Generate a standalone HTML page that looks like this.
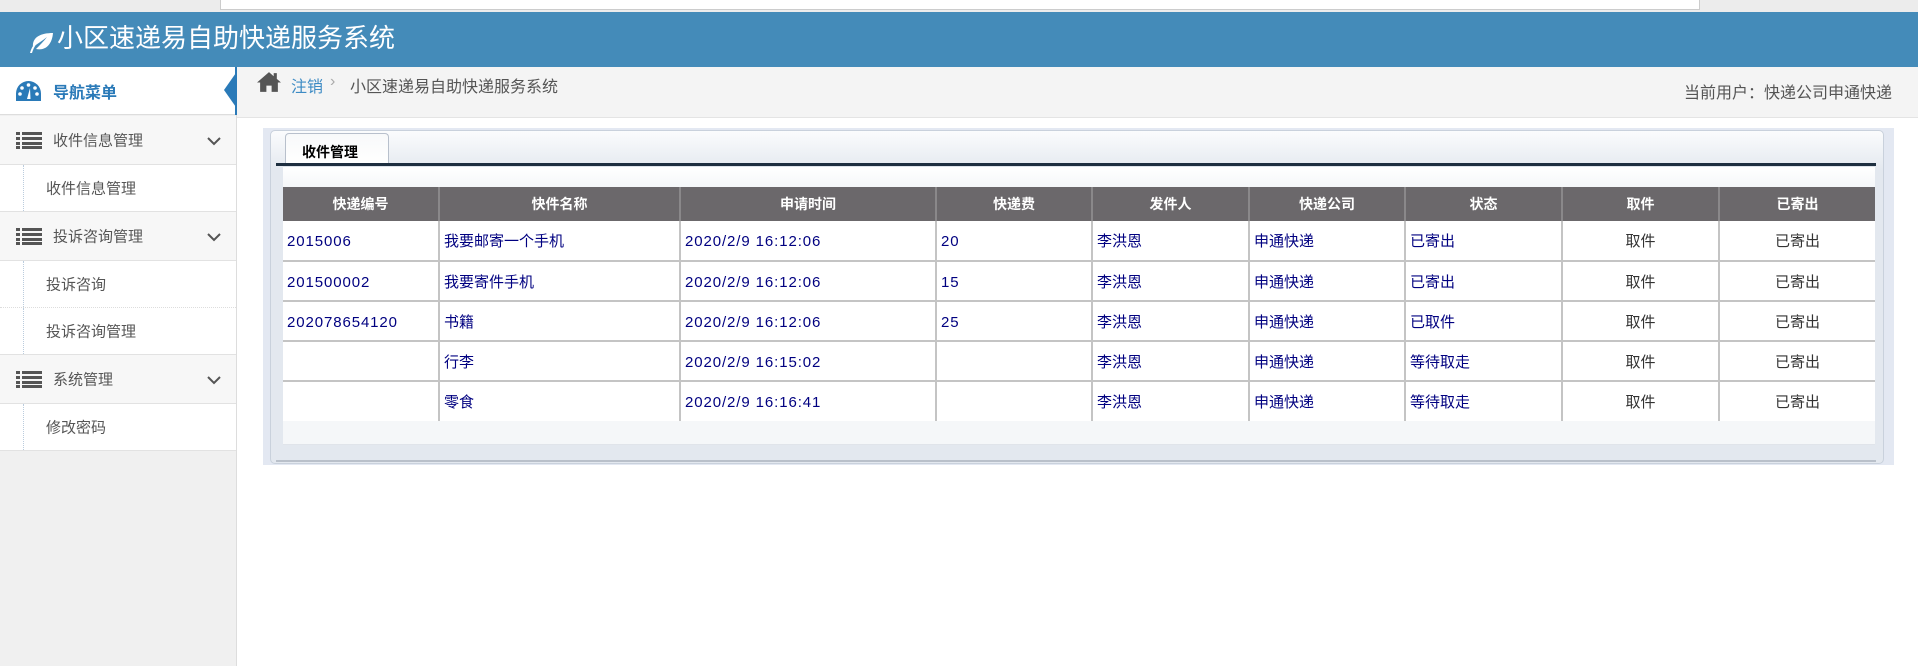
<!DOCTYPE html>
<html><head><meta charset="utf-8"><style>
*{margin:0;padding:0;box-sizing:border-box}
body{width:1918px;height:666px;overflow:hidden;background:#fff;font-family:"Liberation Sans","Noto Sans CJK SC",sans-serif;position:relative}
.abs{position:absolute}
#top{left:0;top:0;width:1918px;height:12px;background:#ececec}
#topin{left:220px;top:0;width:1480px;height:10px;background:#fff;border:1px solid #ccc;border-top:none}
#hdr{left:0;top:12px;width:1918px;height:55px;background:#448bb9;color:#fff}
#hdr .t{position:absolute;left:57px;top:9px;font-size:26px;line-height:34px}
#side{left:0;top:67px;width:237px;height:599px;background:#f0f0f0;border-right:1px solid #ddd}
.row{position:absolute;left:0;width:236px;border-bottom:1px solid #e2e2e2;font-size:15px;color:#555}
.grp{background:#f7f7f7}
.sub{background:#fff}
.row span{position:absolute;top:50%;transform:translateY(-50%)}
.dl{position:absolute;left:23px;top:0;bottom:0;border-left:1px dotted #bcd}
#bc{left:237px;top:67px;width:1681px;height:51px;background:#f4f4f4;border-bottom:1px solid #e4e4e4;font-size:15px;color:#555}
table{border-collapse:collapse;table-layout:fixed}
th{background:#6b686b;color:#fff;font-weight:bold;font-size:14px;height:34px;border-right:2px solid #8a888a}
td{height:40px;border:2px solid #c4c4c4;border-top:none;border-left:none;font-size:15px;color:#000080;padding-left:4px;background:#fff}
td.n{letter-spacing:0.9px;padding-top:2px}
td.c{text-align:center;color:#333;padding:0}
tr:last-child td{border-bottom:none}
</style></head><body>
<div id="top" class="abs"></div><div id="topin" class="abs"></div>
<div id="hdr" class="abs">
<svg class="abs" style="left:27px;top:19px" width="27" height="24" viewBox="0 0 27 24"><path d="M3 22 C5 14 10 9 18 6 C11 10 7 15 5 22Z M6 16 C5 6 14 2 26 2 C25 14 18 20 9 18 C13 14 17 10 20 6 C15 10 10 13 6 16Z" fill="#fff"/></svg>
<div class="t">小区速递易自助快递服务系统</div></div>
<div id="side" class="abs">
<div class="row sub" style="top:0;height:48px;border-bottom:1px solid #ddd">
<svg style="position:absolute;left:15px;top:13px" width="27" height="22" viewBox="0 0 27 22"><path d="M13.5 1A12.5 12.5 0 0 0 1 13.5V21H26V13.5A12.5 12.5 0 0 0 13.5 1Z" fill="#2a7ab8"/><circle cx="13.5" cy="5" r="1.8" fill="#fff"/><circle cx="7" cy="8" r="1.8" fill="#fff"/><circle cx="20" cy="8" r="1.8" fill="#fff"/><circle cx="5" cy="14" r="1.8" fill="#fff"/><circle cx="22" cy="14" r="1.8" fill="#fff"/><path d="M12 19L15 8L15.5 19Z" fill="#fff"/></svg>
<span style="left:53px;color:#2a7ab8;font-weight:bold;font-size:16px">导航菜单</span></div>
<div class="abs" style="left:224px;top:3px;width:0;height:0;border-top:20px solid transparent;border-bottom:20px solid transparent;border-right:14px solid #2a7ab8"></div>
<div class="abs" style="left:235px;top:0;width:4px;height:48px;background:#2a7ab8"></div>
<div class="row grp" style="top:49px;height:49px"><svg style="position:absolute;left:16px;top:16px" width="26" height="17"><g fill="#555"><rect x="0" y="0" width="4" height="3"/><rect x="6" y="0" width="20" height="3"/><rect x="0" y="5" width="4" height="3"/><rect x="6" y="5" width="20" height="3"/><rect x="0" y="10" width="4" height="3"/><rect x="6" y="10" width="20" height="3"/><rect x="0" y="14" width="4" height="3"/><rect x="6" y="14" width="20" height="3"/></g></svg><span style="left:53px">收件信息管理</span><svg style="position:absolute;left:207px;top:21px" width="14" height="9"><path d="M1 1L7 7L13 1" stroke="#555" stroke-width="2" fill="none"/></svg></div>
<div class="row sub" style="top:98px;height:47px"><div class="dl"></div><span style="left:46px">收件信息管理</span></div>
<div class="row grp" style="top:145px;height:49px"><svg style="position:absolute;left:16px;top:16px" width="26" height="17"><g fill="#555"><rect x="0" y="0" width="4" height="3"/><rect x="6" y="0" width="20" height="3"/><rect x="0" y="5" width="4" height="3"/><rect x="6" y="5" width="20" height="3"/><rect x="0" y="10" width="4" height="3"/><rect x="6" y="10" width="20" height="3"/><rect x="0" y="14" width="4" height="3"/><rect x="6" y="14" width="20" height="3"/></g></svg><span style="left:53px">投诉咨询管理</span><svg style="position:absolute;left:207px;top:21px" width="14" height="9"><path d="M1 1L7 7L13 1" stroke="#555" stroke-width="2" fill="none"/></svg></div>
<div class="row sub" style="top:194px;height:47px;border-bottom:1px dotted #ddd"><div class="dl"></div><span style="left:46px">投诉咨询</span></div>
<div class="row sub" style="top:241px;height:47px"><div class="dl"></div><span style="left:46px">投诉咨询管理</span></div>
<div class="row grp" style="top:288px;height:49px"><svg style="position:absolute;left:16px;top:16px" width="26" height="17"><g fill="#555"><rect x="0" y="0" width="4" height="3"/><rect x="6" y="0" width="20" height="3"/><rect x="0" y="5" width="4" height="3"/><rect x="6" y="5" width="20" height="3"/><rect x="0" y="10" width="4" height="3"/><rect x="6" y="10" width="20" height="3"/><rect x="0" y="14" width="4" height="3"/><rect x="6" y="14" width="20" height="3"/></g></svg><span style="left:53px">系统管理</span><svg style="position:absolute;left:207px;top:21px" width="14" height="9"><path d="M1 1L7 7L13 1" stroke="#555" stroke-width="2" fill="none"/></svg></div>
<div class="row sub" style="top:337px;height:47px"><div class="dl"></div><span style="left:46px">修改密码</span></div>
</div>
<div id="bc" class="abs">
<svg class="abs" style="left:20px;top:5px" width="24" height="20" viewBox="0 0 23 19"><path d="M11.5 0L0 10H3V19H9V13H14V19H20V10H23L19 6.5V1H16V4Z" fill="#555"/></svg>
<span class="abs" style="left:54px;top:6px;color:#3d8bc4;font-size:16px">注销</span>
<span class="abs" style="left:93px;top:6px;color:#aaa;font-size:16px">›</span>
<span class="abs" style="left:113px;top:6px;font-size:16px">小区速递易自助快递服务系统</span>
<span class="abs" style="right:26px;top:12px;font-size:16px">当前用户：快递公司申通快递</span>
</div>
<div class="abs" style="left:263px;top:128px;width:1631px;height:337px;background:#e3e8f2"></div>
<div class="abs" style="left:270px;top:130px;width:1614px;height:334px;background:linear-gradient(#fbfcfd,#e3e8ef 40px);border:1px solid #c9d1dc;border-radius:5px"></div>
<div class="abs" style="left:285px;top:133px;width:104px;height:31px;background:linear-gradient(#f8f9fa,#fff);border:1px solid #b8c0cc;border-bottom:none;border-radius:4px 4px 0 0;font-size:14px;font-weight:bold;padding:8px 0 0 16px;color:#000">收件管理</div>
<div class="abs" style="left:276px;top:163px;width:1600px;height:3px;background:#1e2f40"></div>
<div class="abs" style="left:283px;top:166px;width:1592px;height:279px;background:linear-gradient(#fff,#f5f7f9 20px);border-top:1px solid #dde3ea"></div>
<div class="abs" style="left:283px;top:444px;width:1592px;height:1px;background:#e0e4ea"></div>
<div class="abs" style="left:276px;top:460px;width:1600px;height:2px;background:#b9c0ca"></div>
<table class="abs" style="left:283px;top:187px;width:1592px">
<colgroup><col style="width:156px"><col style="width:241px"><col style="width:256px"><col style="width:156px"><col style="width:157px"><col style="width:156px"><col style="width:157px"><col style="width:157px"><col style="width:156px"></colgroup>
<tr><th>快递编号</th><th>快件名称</th><th>申请时间</th><th>快递费</th><th>发件人</th><th>快递公司</th><th>状态</th><th>取件</th><th style="border-right:none">已寄出</th></tr>
<tr><td class="n">2015006</td><td>我要邮寄一个手机</td><td class="n">2020/2/9 16:12:06</td><td class="n">20</td><td>李洪恩</td><td>申通快递</td><td>已寄出</td><td class="c">取件</td><td class="c" style="border-right:none">已寄出</td></tr>
<tr><td class="n">201500002</td><td>我要寄件手机</td><td class="n">2020/2/9 16:12:06</td><td class="n">15</td><td>李洪恩</td><td>申通快递</td><td>已寄出</td><td class="c">取件</td><td class="c" style="border-right:none">已寄出</td></tr>
<tr><td class="n">202078654120</td><td>书籍</td><td class="n">2020/2/9 16:12:06</td><td class="n">25</td><td>李洪恩</td><td>申通快递</td><td>已取件</td><td class="c">取件</td><td class="c" style="border-right:none">已寄出</td></tr>
<tr><td></td><td>行李</td><td class="n">2020/2/9 16:15:02</td><td></td><td>李洪恩</td><td>申通快递</td><td>等待取走</td><td class="c">取件</td><td class="c" style="border-right:none">已寄出</td></tr>
<tr><td></td><td>零食</td><td class="n">2020/2/9 16:16:41</td><td></td><td>李洪恩</td><td>申通快递</td><td>等待取走</td><td class="c">取件</td><td class="c" style="border-right:none">已寄出</td></tr>
</table>
</body></html>
